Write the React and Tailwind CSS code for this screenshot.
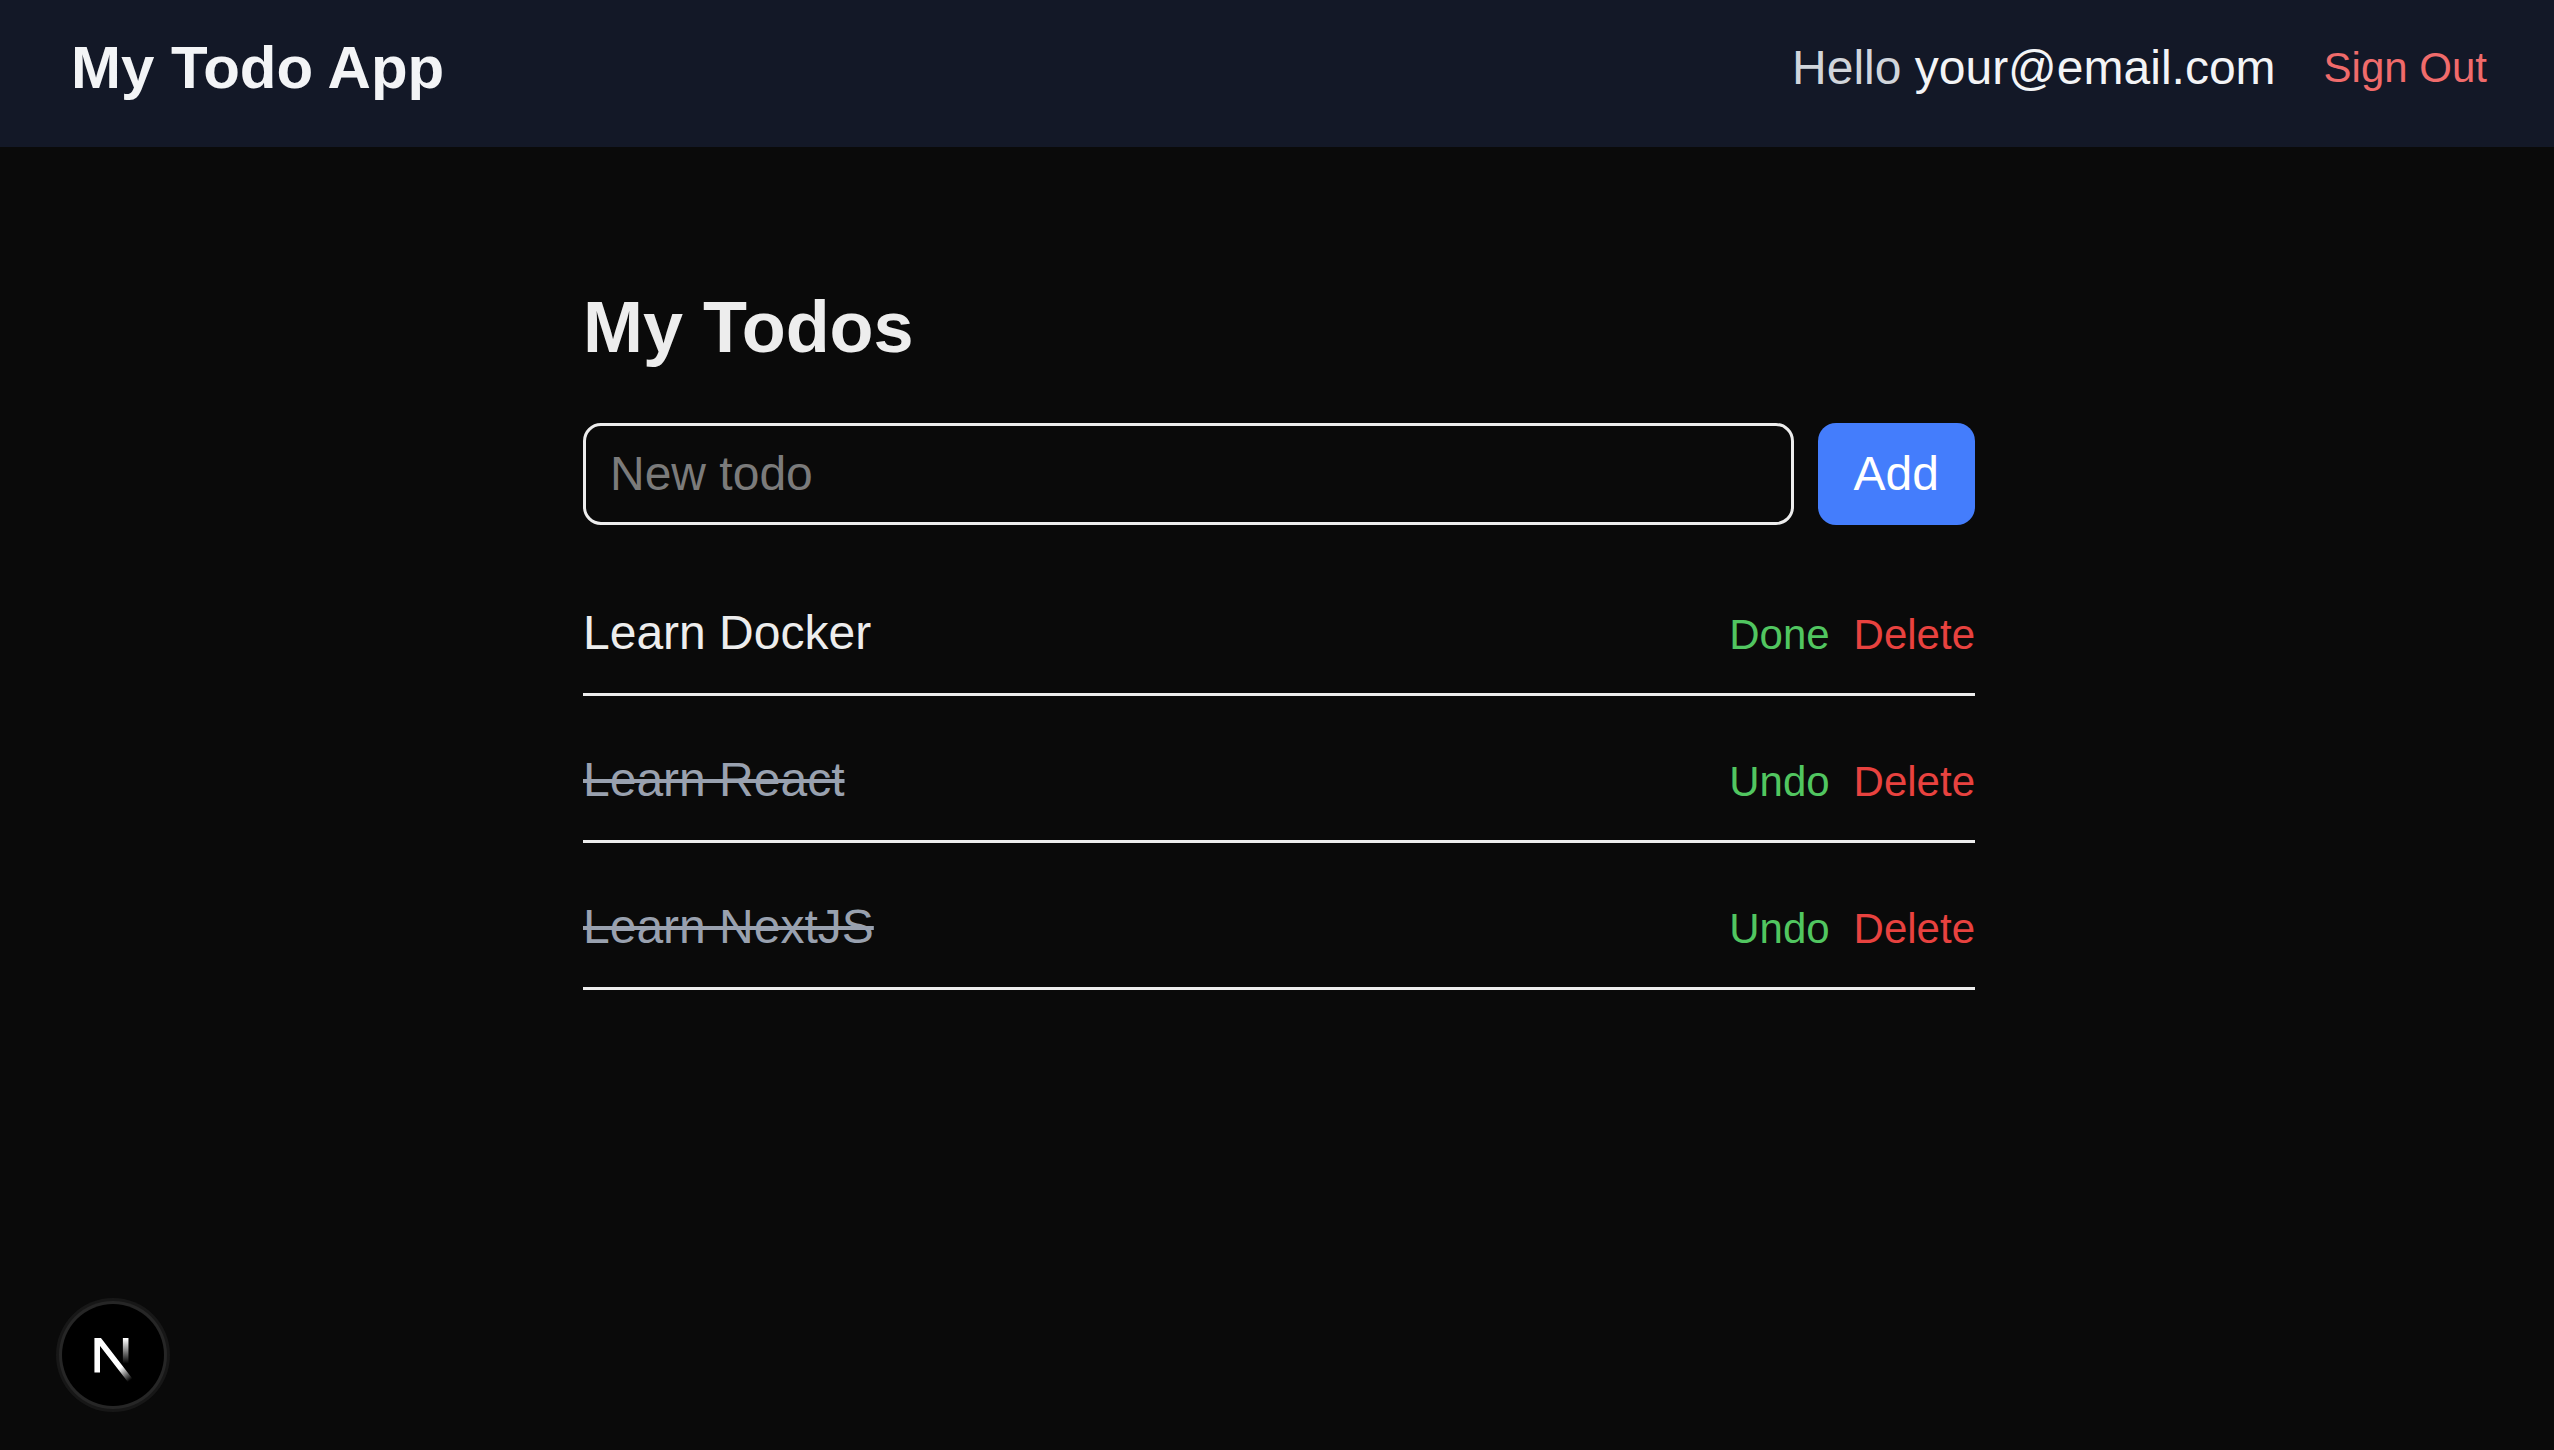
import { useState } from "react";

const initialTodos = [
  { id: 1, title: "Learn Docker", done: false },
  { id: 2, title: "Learn React", done: true },
  { id: 3, title: "Learn NextJS", done: true },
];

function Header() {
  return (
    <header className="flex items-center justify-between bg-[#131827] pt-[26px] pr-[67px] pb-[37px] pl-[71px]">
      <a href="#home" className="text-[60px] leading-[84px] font-bold text-[#f3f4f6]">
        My Todo App
      </a>
      <div className="flex items-center gap-12">
        <p className="text-[48px] leading-[72px] text-[#d1d5db]">
          Hello <span className="text-[#f3f4f6]">your@email.com</span>
        </p>
        <button type="button" className="text-[42px] leading-[60px] text-[#f06b6b]">
          Sign Out
        </button>
      </div>
    </header>
  );
}

function TodoItem({ todo, onToggle, onDelete }) {
  return (
    <li className="flex items-baseline justify-between border-b-3 border-[#ededed] py-6">
      <span
        className={
          todo.done
            ? "text-[48px] leading-[72px] text-[#99a1af] line-through"
            : "text-[48px] leading-[72px]"
        }
      >
        {todo.title}
      </span>
      <div className="flex gap-6 text-[42px] leading-[60px]">
        <button type="button" onClick={onToggle} className="text-[#51c660]">
          {todo.done ? "Undo" : "Done"}
        </button>
        <button type="button" onClick={onDelete} className="text-[#e8423f]">
          Delete
        </button>
      </div>
    </li>
  );
}

function DevBadge() {
  return (
    <button
      type="button"
      aria-label="Open Next.js Dev Tools"
      className="fixed bottom-[38px] left-[56px] size-[114px] rounded-full"
    >
      <svg viewBox="0 0 114 114" className="size-full" fill="none">
        <circle cx="57" cy="57" r="57" fill="#171717" />
        <circle cx="57" cy="57" r="54" fill="#262626" />
        <circle cx="57" cy="57" r="51" fill="#000" />
        <g transform="translate(34.2 36.7) scale(3)" clipPath="url(#n-clip)">
          <path d="M13.3 15.2 L2.34 1 V12.6" stroke="url(#n-diagonal)" strokeWidth="1.86" />
          <path d="M11.825 1.1 V13.1" stroke="url(#n-stem)" strokeWidth="1.86" />
        </g>
        <defs>
          <clipPath id="n-clip">
            <rect x="0" y="1.1" width="16" height="15" />
          </clipPath>
          <linearGradient id="n-diagonal" x1="9.96" y1="11.12" x2="15.48" y2="17.97" gradientUnits="userSpaceOnUse">
            <stop stopColor="#fff" />
            <stop offset="0.604" stopColor="#fff" stopOpacity="0" />
          </linearGradient>
          <linearGradient id="n-stem" x1="11.82" y1="1.4" x2="11.79" y2="9.63" gradientUnits="userSpaceOnUse">
            <stop stopColor="#fff" />
            <stop offset="1" stopColor="#fff" stopOpacity="0" />
          </linearGradient>
        </defs>
      </svg>
    </button>
  );
}

export default function App() {
  const [todos, setTodos] = useState(initialTodos);
  const [title, setTitle] = useState("");

  const addTodo = (event) => {
    event.preventDefault();
    if (!title.trim()) return;
    setTodos([...todos, { id: Date.now(), title: title.trim(), done: false }]);
    setTitle("");
  };

  return (
    <div className="min-h-screen bg-[#0a0a0a] font-['Liberation_Sans',Arial,sans-serif] text-[#ededed]">
      <Header />
      <main className="pt-[132px] pl-1">
        <div className="mx-auto max-w-[1536px] px-[72px]">
          <h1 className="mb-12 text-[72px] leading-[96px] font-bold">My Todos</h1>
          <form onSubmit={addTodo} className="mb-12 flex gap-6">
            <input
              type="text"
              aria-label="New todo"
              placeholder="New todo"
              value={title}
              onChange={(event) => setTitle(event.target.value)}
              className="min-w-0 flex-1 rounded-[18px] border-3 border-[#ededed] px-6 py-3 text-[48px] leading-[72px] placeholder:text-[#7b7b7b]"
            />
            <button
              type="submit"
              className="rounded-[18px] bg-[#447dfc] px-9 text-[48px] leading-[72px] text-white"
            >
              Add
            </button>
          </form>
          <ul className="flex flex-col gap-6">
            {todos.map((todo) => (
              <TodoItem
                key={todo.id}
                todo={todo}
                onToggle={() =>
                  setTodos(todos.map((t) => (t.id === todo.id ? { ...t, done: !t.done } : t)))
                }
                onDelete={() => setTodos(todos.filter((t) => t.id !== todo.id))}
              />
            ))}
          </ul>
        </div>
      </main>
      <DevBadge />
    </div>
  );
}
